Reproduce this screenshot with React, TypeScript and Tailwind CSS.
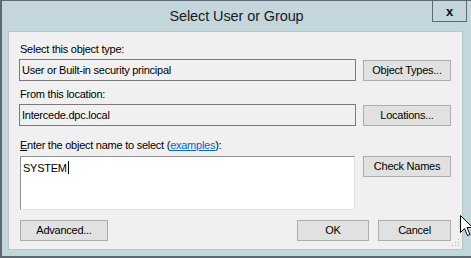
import clsx from 'clsx'

const font = { fontFamily: '"Liberation Sans", Arial, sans-serif' }

const btnClass =
  'flex h-[21px] items-center justify-center border border-[#adadad] bg-[#e1e1e1] text-[11px] leading-[13px] tracking-[-0.25px] text-[#000]'

function Btn({ label, className, primary }: { label: React.ReactNode; className?: string; primary?: boolean }) {
  return (
    <div className={clsx(btnClass, primary && 'border-[#3c7fb1]', className)}>{label}</div>
  )
}

function Label({ children }: { children: React.ReactNode }) {
  return (
    <div className="ml-px h-[13px] text-[11px] leading-[13px] tracking-[-0.25px] text-[#000]">{children}</div>
  )
}

function Pointer() {
  return (
    <svg
      className="pointer-events-none absolute left-[457px] top-[213px]"
      width="14"
      height="23"
      viewBox="0 0 14 23"
    >
      <path
        d="M1.5 1.5 L1.5 18.5 L5.5 14.5 L8.5 21.5 L11 20.5 L8 13.5 L13.5 13.5 Z"
        fill="#fff"
        stroke="#000"
        strokeWidth="1"
        strokeLinejoin="miter"
      />
    </svg>
  )
}

function Grip() {
  const dots = [
    [8, 0],
    [5, 3],
    [8, 3],
    [2, 6],
    [5, 6],
    [8, 6],
  ]
  return (
    <svg className="absolute bottom-[2px] right-[2px]" width="10" height="8" viewBox="0 0 10 8">
      {dots.map(([x, y]) => (
        <rect key={`${x}-${y}`} x={x} y={y} width="1" height="1" fill="#b8b8b8" />
      ))}
    </svg>
  )
}

const fieldClass =
  'h-[22px] w-[337px] border border-[#7a7a7a] bg-[#f0f0f0] pl-[2px] text-[11px] leading-[20px] tracking-[-0.25px]'

export default function App() {
  return (
    <div
      className="relative h-[258px] w-[471px] overflow-hidden border-t border-b-2 border-l-2 border-[#5d6a72] bg-[#c3d6dc]"
      style={font}
    >
      <div className="grid h-[30px] grid-cols-[1fr_auto_1fr]">
        <div />
        <div className="pt-[6px] text-[14.5px] leading-[18px] tracking-[-0.1px] text-[#1b1b1b]">
          Select User or Group
        </div>
        <div className="flex justify-end pr-[4px]">
          <div className="-mt-px flex h-[22px] w-[35px] items-center justify-center border border-[#5d6a72] text-[13px] font-bold leading-none text-[#111]">
            x
          </div>
        </div>
      </div>

      <div className="relative ml-[6px] h-[219px] w-[455px] border border-[#b5c8cf] bg-[#f0f0f0] pl-[10px] pr-[11px] pt-[11px]">
        <Label>Select this object type:</Label>
        <div className="mt-[3px] flex items-start gap-[7px]">
          <div className={fieldClass}>User or Built-in security principal</div>
          <Btn label="Object Types..." className="mt-px w-[88px]" />
        </div>

        <div className="mt-[7px]">
          <Label>From this location:</Label>
        </div>
        <div className="mt-[3px] flex items-start gap-[7px]">
          <div className={fieldClass}>Intercede.dpc.local</div>
          <Btn label="Locations..." className="mt-px w-[88px]" />
        </div>

        <div className="mt-[13px]">
          <Label>
            <span className="underline">E</span>nter the object name to select (
            <span className="text-[#0066cc] underline">examples</span>):
          </Label>
        </div>
        <div className="mt-[4px] flex items-start gap-[8px]">
          <div className="ml-px h-[54px] w-[335px] border border-t-[#8f8f8f] border-l-[#8f8f8f] border-r-[#e3e3e3] border-b-[#e3e3e3] bg-white pl-[2px] pt-[2px] text-[11px] leading-[14px] tracking-[-0.25px]">
            SYSTEM
            <span className="ml-px inline-block h-[13px] w-px translate-y-[2px] bg-black" />
          </div>
          <Btn label="Check Names" className="w-[88px]" />
        </div>

        <div className="mt-[10px] flex items-start">
          <Btn label="Advanced..." className="ml-px w-[88px]" />
          <div className="flex-1" />
          <Btn label="OK" className="w-[72px]" primary />
          <Btn label="Cancel" className="ml-[9px] w-[73px]" />
        </div>
        <Grip />
      </div>
      <Pointer />
    </div>
  )
}
